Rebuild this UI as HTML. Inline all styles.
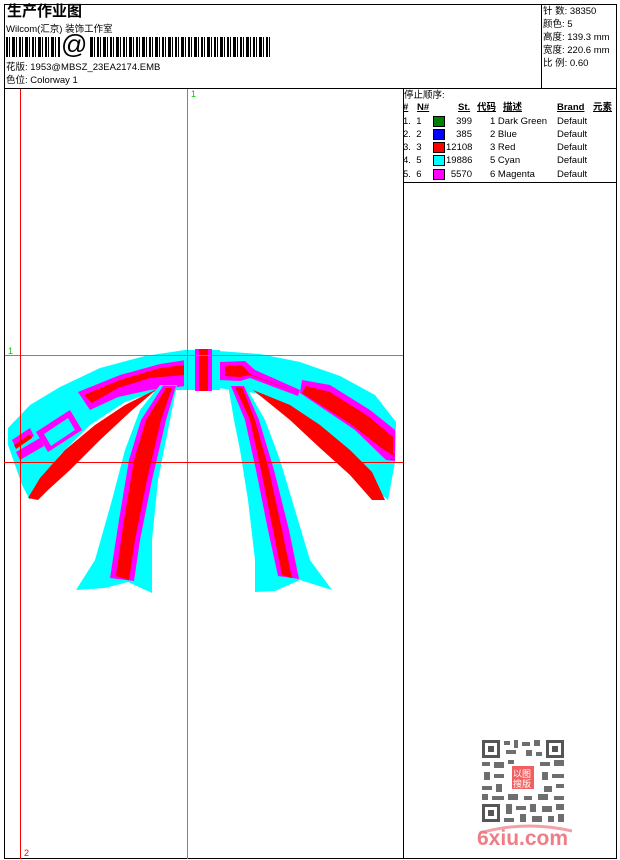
<!DOCTYPE html>
<html><head><meta charset="utf-8"><style>
*{margin:0;padding:0}
body{width:620px;height:860px;background:#fff;position:relative;overflow:hidden;font-family:"Liberation Sans","WenQuanYi Zen Hei","Noto Sans CJK SC",sans-serif;color:#000}
.a{position:absolute;white-space:nowrap}
.t{font-size:9.5px;line-height:11px}
.ln{position:absolute;background:#000}
</style></head><body>
<div class="ln" style="left:4px;top:4px;width:613px;height:1px"></div>
<div class="ln" style="left:4px;top:858px;width:613px;height:1px"></div>
<div class="ln" style="left:4px;top:4px;width:1px;height:855px"></div>
<div class="ln" style="left:616px;top:4px;width:1px;height:855px"></div>
<div class="ln" style="left:4px;top:88px;width:613px;height:1px"></div>
<div class="ln" style="left:541px;top:4px;width:1px;height:84px"></div>
<div class="ln" style="left:403px;top:88px;width:1px;height:771px"></div>
<div class="ln" style="left:403px;top:182px;width:214px;height:1px"></div>

<div class="a" style="left:7px;top:3px;font-size:15px;font-weight:bold;line-height:18px">生产作业图</div>
<div class="a t" style="left:6px;top:24px">Wilcom(汇京) 装饰工作室</div>
<div class="a" style="left:6px;top:37px;width:264px;height:20px;background:repeating-linear-gradient(90deg,#000 0 2px,#fff 2px 3px,#000 3px 4px,#fff 4px 6px,#000 6px 9px,#fff 9px 10px,#000 10px 11px,#fff 11px 13px)"></div>
<div class="a" style="left:60px;top:35px;width:28px;height:24px;background:#fff"></div>
<div class="a" style="left:61px;top:30px;font-size:26px;line-height:28px">@</div>
<div class="a t" style="left:6px;top:62px">花版: 1953@MBSZ_23EA2174.EMB</div>
<div class="a t" style="left:6px;top:75px">色位: Colorway 1</div>

<div class="a t" style="left:543px;top:6px">针 数: 38350</div>
<div class="a t" style="left:543px;top:19px">颜色: 5</div>
<div class="a t" style="left:543px;top:32px">高度: 139.3 mm</div>
<div class="a t" style="left:543px;top:45px">宽度: 220.6 mm</div>
<div class="a t" style="left:543px;top:58px">比 例: 0.60</div>

<div class="a t" style="left:404px;top:90px">停止顺序:</div>
<div class="a t" style="left:403px;top:102px;font-weight:bold;text-decoration:underline">#</div>
<div class="a t" style="left:417px;top:102px;font-weight:bold;text-decoration:underline">N#</div>
<div class="a t" style="left:458px;top:102px;font-weight:bold;text-decoration:underline">St.</div>
<div class="a t" style="left:477px;top:102px;font-weight:bold;text-decoration:underline">代码</div>
<div class="a t" style="left:503px;top:102px;font-weight:bold;text-decoration:underline">描述</div>
<div class="a t" style="left:557px;top:102px;font-weight:bold;text-decoration:underline">Brand</div>
<div class="a t" style="left:593px;top:102px;font-weight:bold;text-decoration:underline">元素</div>

<div class="a t" style="left:403px;top:116px">1.&nbsp; 1</div><div class="a" style="left:433px;top:116px;width:10px;height:9px;background:#008000;border:1px solid #000"></div><div class="a t" style="left:450px;top:116px;width:22px;text-align:right">399</div><div class="a t" style="left:490px;top:116px">1 Dark Green</div><div class="a t" style="left:557px;top:116px">Default</div>
<div class="a t" style="left:403px;top:129px">2.&nbsp; 2</div><div class="a" style="left:433px;top:129px;width:10px;height:9px;background:#0000ff;border:1px solid #000"></div><div class="a t" style="left:450px;top:129px;width:22px;text-align:right">385</div><div class="a t" style="left:490px;top:129px">2 Blue</div><div class="a t" style="left:557px;top:129px">Default</div>
<div class="a t" style="left:403px;top:142px">3.&nbsp; 3</div><div class="a" style="left:433px;top:142px;width:10px;height:9px;background:#ff0000;border:1px solid #000"></div><div class="a t" style="left:446px;top:142px;width:26px;text-align:right">12108</div><div class="a t" style="left:490px;top:142px">3 Red</div><div class="a t" style="left:557px;top:142px">Default</div>
<div class="a t" style="left:403px;top:155px">4.&nbsp; 5</div><div class="a" style="left:433px;top:155px;width:10px;height:9px;background:#00ffff;border:1px solid #000"></div><div class="a t" style="left:446px;top:155px;width:26px;text-align:right">19886</div><div class="a t" style="left:490px;top:155px">5 Cyan</div><div class="a t" style="left:557px;top:155px">Default</div>
<div class="a t" style="left:403px;top:169px">5.&nbsp; 6</div><div class="a" style="left:433px;top:169px;width:10px;height:9px;background:#ff00ff;border:1px solid #000"></div><div class="a t" style="left:450px;top:169px;width:22px;text-align:right">5570</div><div class="a t" style="left:490px;top:169px">6 Magenta</div><div class="a t" style="left:557px;top:169px">Default</div>

<svg class="a" style="left:0;top:0" width="404" height="860">
<g>
<polygon fill="#00ffff" points="8,428 30,405 60,387 100,368 145,356 185,350 185,390 160,390 125,402 90,425 60,455 40,485 30,500 22,485 14,462 8,445"/>
<polygon fill="#00ffff" points="218,351 260,354 300,362 340,376 375,395 396,422 395,462 388,500 370,485 335,448 295,415 255,393 218,388"/>
<polygon fill="#ff00ff" points="78,392 120,375 160,364 186,360 186,386 150,390 118,397 90,410"/>
<polygon fill="#ff0000" points="84,395 120,380 160,368 184,365 184,375 150,378 118,388 92,403"/>
<polygon fill="#ff00ff" points="36,432 70,410 82,430 48,452"/>
<polygon fill="#00ffff" points="44,434 68,418 75,430 51,446"/>
<polygon fill="#ff00ff" points="12,440 30,428 34,436 16,448"/>
<polygon fill="#ff00ff" points="16,452 40,438 44,446 20,460"/>
<polygon fill="#ff0000" points="14,445 30,434 32,438 16,449"/>
<polygon fill="#ff00ff" points="302,380 330,385 370,410 395,430 395,461 386,460 355,430 300,393"/>
<polygon fill="#ff0000" points="306,386 330,392 368,416 393,437 393,455 384,450 352,425 302,393"/>
<polygon fill="#ff00ff" points="220,362 245,361 255,370 300,390 298,396 250,378 240,381 220,380"/>
<polygon fill="#ff0000" points="225,366 242,365 250,374 296,392 250,375 240,377 225,376"/>
<polygon fill="#ff0000" points="28,498 40,478 65,450 95,425 125,405 157,389 130,412 100,440 70,470 48,490 38,500"/>
<polygon fill="#ff0000" points="253,390 290,405 320,425 350,450 372,472 385,500 372,500 350,475 320,448 290,420"/>
<polygon fill="#00ffff" points="160,385 177,385 170,420 158,480 152,540 152,593 128,582 105,588 76,590 95,560 112,500 125,450 140,410"/>
<polygon fill="#ff00ff" points="163,386 176,386 166,420 152,480 140,540 134,581 110,578 119,520 129,460 141,420"/>
<polygon fill="#ff0000" points="166,388 172,388 161,420 147,480 135,540 129,580 116,576 124,520 134,460 146,420"/>
<polygon fill="#00ffff" points="228,385 245,385 265,420 280,460 292,500 310,560 332,590 300,580 275,591 255,592 255,560 248,500 240,450 234,420"/>
<polygon fill="#ff00ff" points="231,386 244,386 259,420 274,470 289,530 299,579 278,576 268,530 256,470 245,420"/>
<polygon fill="#ff0000" points="235,387 242,387 255,420 269,470 282,530 292,578 282,575 273,530 261,470 250,420"/>
<rect x="184" y="350" width="36" height="40" fill="#00ffff"/>
<rect x="195" y="349" width="17" height="42" fill="#ff00ff"/>
<rect x="199" y="349" width="9" height="42" fill="#ff0000"/>
</g>
<rect x="187" y="89" width="1" height="770" fill="#00dd00"/>
<rect x="5" y="355" width="398" height="1" fill="#00dd00"/>
<rect x="20" y="89" width="1" height="770" fill="#ff0000"/>
<rect x="4" y="462" width="399" height="1" fill="#ff0000"/>
<text x="191" y="97" font-size="9" fill="#00cc00" font-family="Liberation Sans">1</text>
<text x="8" y="354" font-size="9" fill="#00cc00" font-family="Liberation Sans">1</text>
<text x="390" y="460" font-size="9" fill="#ff0000" font-family="Liberation Sans">2</text>
<text x="24" y="856" font-size="9" fill="#ff0000" font-family="Liberation Sans">2</text>
</svg>

<svg class="a" style="left:480px;top:738px" width="86" height="86">
<rect width="86" height="86" fill="#fff"/>
<g fill="#555">
<rect x="2" y="2" width="18" height="18"/><rect x="66" y="2" width="18" height="18"/><rect x="2" y="66" width="18" height="18"/>
</g>
<g fill="#fff"><rect x="5" y="5" width="12" height="12"/><rect x="69" y="5" width="12" height="12"/><rect x="5" y="69" width="12" height="12"/></g>
<g fill="#555"><rect x="8" y="8" width="6" height="6"/><rect x="72" y="8" width="6" height="6"/><rect x="8" y="72" width="6" height="6"/></g>
<g fill="#555" opacity="0.85">
<rect x="24" y="3" width="6" height="4"/><rect x="34" y="2" width="4" height="8"/><rect x="42" y="4" width="8" height="4"/><rect x="54" y="2" width="6" height="6"/>
<rect x="26" y="12" width="10" height="4"/><rect x="46" y="12" width="6" height="6"/><rect x="56" y="14" width="6" height="4"/>
<rect x="2" y="24" width="8" height="4"/><rect x="14" y="24" width="10" height="6"/><rect x="28" y="22" width="6" height="4"/><rect x="60" y="24" width="10" height="4"/><rect x="74" y="22" width="10" height="6"/>
<rect x="4" y="34" width="6" height="8"/><rect x="14" y="36" width="10" height="4"/><rect x="62" y="34" width="6" height="8"/><rect x="72" y="36" width="12" height="4"/>
<rect x="2" y="48" width="10" height="4"/><rect x="16" y="46" width="6" height="8"/><rect x="64" y="48" width="8" height="6"/><rect x="76" y="46" width="8" height="4"/>
<rect x="2" y="56" width="6" height="6"/><rect x="12" y="58" width="12" height="4"/><rect x="28" y="56" width="10" height="6"/><rect x="44" y="58" width="8" height="4"/><rect x="58" y="56" width="10" height="6"/><rect x="74" y="58" width="10" height="4"/>
<rect x="26" y="66" width="6" height="10"/><rect x="36" y="68" width="10" height="4"/><rect x="50" y="66" width="6" height="8"/><rect x="62" y="68" width="10" height="6"/><rect x="76" y="66" width="8" height="6"/>
<rect x="24" y="80" width="10" height="4"/><rect x="40" y="76" width="6" height="8"/><rect x="52" y="78" width="10" height="6"/><rect x="68" y="78" width="6" height="6"/><rect x="78" y="76" width="6" height="8"/>
</g>
<rect x="31" y="27" width="24" height="25" fill="#fff"/>
<rect x="32" y="28" width="22" height="23" fill="#f06060"/>
<text x="33" y="39" font-size="9" fill="#fff" font-family="WenQuanYi Zen Hei,sans-serif">以图</text>
<text x="33" y="49" font-size="9" fill="#fff" font-family="WenQuanYi Zen Hei,sans-serif">搜版</text>
</svg>
<svg class="a" style="left:470px;top:822px" width="110" height="12"><path d="M10 11 Q55 -2 102 9" stroke="#f4a0a8" stroke-width="3" fill="none"/></svg>
<div class="a" style="left:477px;top:827px;font-size:21px;font-weight:bold;color:#ef7d85;line-height:24px">6xiu.com</div>
</body></html>
